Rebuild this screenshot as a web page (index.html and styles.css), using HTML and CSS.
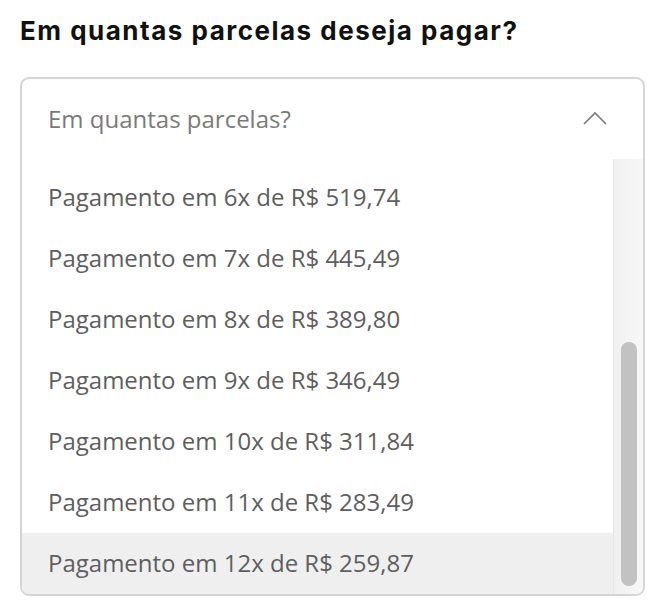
FILE: index.html
```html
<!DOCTYPE html>
<html lang="pt-BR">
<head>
<meta charset="utf-8">
<title>Parcelas</title>
<link rel="stylesheet" href="styles.css">
</head>
<body>
<h1 class="title">Em quantas parcelas deseja pagar?</h1>
<div class="select">
  <div class="select-head">
    <span class="placeholder">Em quantas parcelas?</span>
    <svg class="chevron" width="24" height="14" viewBox="0 0 24 14" aria-hidden="true">
      <path d="M1 13 L12 2 L23 13" fill="none" stroke="#7a7a7a" stroke-width="1.6"/>
    </svg>
  </div>
  <div class="list">
    <ul class="options">
      <li class="option">Pagamento em 6x de R$ 519,74</li>
      <li class="option">Pagamento em 7x de R$ 445,49</li>
      <li class="option">Pagamento em 8x de R$ 389,80</li>
      <li class="option">Pagamento em 9x de R$ 346,49</li>
      <li class="option">Pagamento em 10x de R$ 311,84</li>
      <li class="option">Pagamento em 11x de R$ 283,49</li>
      <li class="option option-active">Pagamento em 12x de R$ 259,87</li>
    </ul>
    <div class="track"><div class="thumb"></div></div>
  </div>
</div>
</body>
</html>
```

FILE: styles.css
```css
html, body {
  margin: 0;
  background: #ffffff;
}
body {
  padding: 14px 12px 0 20px;
  font-family: "Open Sans", "Liberation Sans", sans-serif;
}
.title {
  margin: 0;
  font-family: Inter, "Liberation Sans", sans-serif;
  font-weight: 700;
  font-size: 26px;
  line-height: 34px;
  letter-spacing: 1.5px;
  color: #111111;
}
.select {
  margin-top: 29px;
  width: 625px;
  box-sizing: border-box;
  border: 2px solid #d5d5d5;
  border-radius: 9px;
  overflow: hidden;
}
.select-head {
  height: 80px;
  display: flex;
  align-items: center;
  justify-content: space-between;
  padding: 0 36px 0 26px;
}
.placeholder {
  font-size: 24px;
  color: #7a7a7a;
  padding-bottom: 2px;
}
.chevron {
  display: block;
  margin-top: -2px;
}
.list {
  display: flex;
  height: 435px;
}
.options {
  list-style: none;
  margin: 0;
  padding: 8px 0 0 0;
  flex: 1;
}
.option {
  height: 61px;
  box-sizing: border-box;
  display: flex;
  align-items: center;
  padding: 0 0 3px 26px;
  font-size: 24px;
  color: #5e5e5e;
}
.option-active {
  background: #efefef;
}
.track {
  width: 30px;
  background: linear-gradient(to right, #f0f0f0, #f8f8f8);
  border-left: 1px solid #e6e6e6;
  display: flex;
  flex-direction: column;
  justify-content: flex-end;
  align-items: center;
  padding-bottom: 8px;
  box-sizing: border-box;
}
.thumb {
  width: 16px;
  height: 244px;
  border-radius: 8px;
  background: #c2c2c2;
}
```
